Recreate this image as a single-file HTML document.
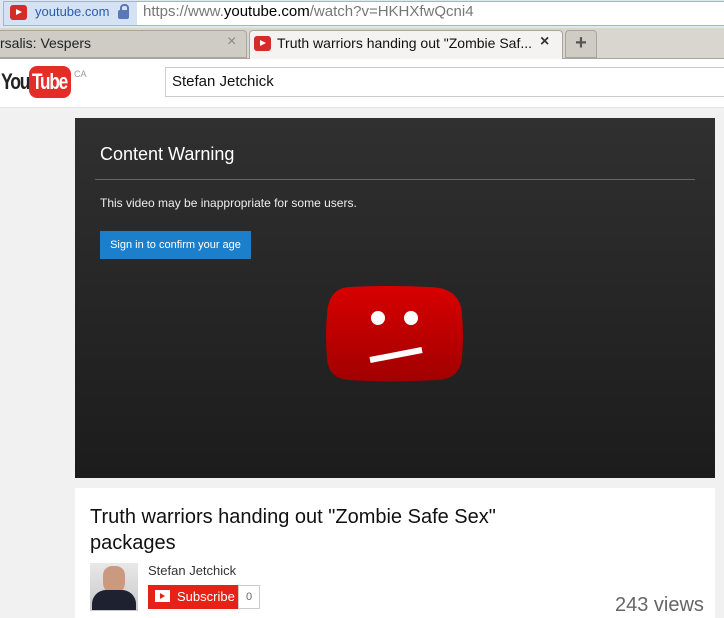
<!DOCTYPE html>
<html><head><style>
body{margin:0;width:724px;height:606px;overflow:hidden;background:#f1f1f1;font-family:"Liberation Sans",sans-serif;position:relative}
.a{position:absolute}
</style></head><body>
<div class="a" style="left:0;top:0;width:724px;height:28px;background:#dfe6ef"></div>
<div class="a" style="top:1px;left:3px;width:134px;height:23px;background:#d4e2f4;border:1px solid #9fb5d2"></div>
<div class="a" style="left:137px;top:1px;width:587px;height:23px;background:#fff;border:1px solid #9fb5d2;border-left:none"></div>
<div class="a" style="left:10px;top:5px;width:17px;height:15px;background:#d42b2b;border-radius:3px"></div>
<div class="a" style="left:16px;top:9px;width:0;height:0;border-left:6px solid #fff;border-top:3.5px solid transparent;border-bottom:3.5px solid transparent"></div>
<div class="a" style="left:35px;top:4px;font-size:13px;color:#2a5db0">youtube.com</div>
<div class="a" style="left:118px;top:10px;width:11px;height:9px;background:#5a78b8;border-radius:2px"></div>
<div class="a" style="left:120px;top:4px;width:5px;height:7px;border:2px solid #5a78b8;border-bottom:none;border-radius:4px 4px 0 0"></div>
<div class="a" style="left:143px;top:3px;font-size:15px;color:#777">https://www.<span style="color:#000">youtube.com</span>/watch?v=HKHXfwQcni4</div>
<div class="a" style="left:0;top:28px;width:724px;height:30px;background:#d9d6d0;border-bottom:1px solid #a9a59d"></div>
<div class="a" style="left:-5px;top:30px;width:250px;height:26px;background:#cfccc6;border:1px solid #a9a59d;border-radius:4px 4px 0 0"></div>
<div class="a" style="left:0;top:35px;font-size:14px;color:#222">rsalis: Vespers</div>
<div class="a" style="left:227px;top:33px;font-size:16px;color:#888">×</div>
<div class="a" style="left:249px;top:30px;width:312px;height:28px;background:#f4f3f1;border:1px solid #a9a59d;border-bottom:none;border-radius:4px 4px 0 0"></div>
<div class="a" style="left:254px;top:36px;width:17px;height:15px;background:#d42b2b;border-radius:3px"></div>
<div class="a" style="left:260px;top:40px;width:0;height:0;border-left:6px solid #fff;border-top:3.5px solid transparent;border-bottom:3.5px solid transparent"></div>
<div class="a" style="left:277px;top:35px;font-size:14px;color:#111">Truth warriors handing out "Zombie Saf...</div>
<div class="a" style="left:540px;top:33px;font-size:16px;color:#333;font-weight:bold">×</div>
<div class="a" style="left:565px;top:30px;width:30px;height:26px;background:#cfccc6;border:1px solid #a9a59d;border-radius:4px 4px 0 0;text-align:center;font-size:20px;line-height:24px;color:#555;font-weight:bold">+</div>
<div class="a" style="left:0;top:59px;width:724px;height:48px;background:#fff;border-bottom:1px solid #e4e4e4"></div>
<div class="a" style="left:1px;top:69px;font-size:22px;font-weight:bold;color:#222;letter-spacing:-1.5px;transform:scaleX(.8);transform-origin:left">You</div>
<div class="a" style="left:29px;top:66px;width:42px;height:32px;background:#e52d27;border-radius:8px"></div>
<div class="a" style="left:32px;top:69px;font-size:22px;font-weight:bold;color:#fff;letter-spacing:-1.5px;transform:scaleX(.78);transform-origin:left">Tube</div>
<div class="a" style="left:74px;top:69px;font-size:9px;color:#999">CA</div>
<div class="a" style="left:165px;top:67px;width:570px;height:28px;background:#fff;border:1px solid #ccc"></div>
<div class="a" style="left:172px;top:73px;font-size:15px;color:#111">Stefan Jetchick</div>
<div class="a" style="left:75px;top:118px;width:640px;height:360px;background:linear-gradient(#303030,#1c1c1c)"></div>
<div class="a" style="left:100px;top:144px;font-size:18px;color:#fff">Content Warning</div>
<div class="a" style="left:95px;top:179px;width:600px;height:1px;background:#666"></div>
<div class="a" style="left:100px;top:196px;font-size:12px;color:#eee">This video may be inappropriate for some users.</div>
<div class="a" style="left:100px;top:231px;width:151px;height:28px;background:#1b7fcc;color:#fff;font-size:11px;line-height:28px;text-align:center">Sign in to confirm your age</div>
<svg class="a" style="left:320px;top:280px" width="150" height="110">
<defs><linearGradient id="g" x1="0" y1="0" x2="0" y2="1"><stop offset="0" stop-color="#d80000"/><stop offset="1" stop-color="#a10000"/></linearGradient></defs>
<path d="M30 7 Q69 5 110 7 Q141 8 142 35 Q144 56 142 78 Q140 100 115 100 Q70 103 30 100 Q8 99 7 78 Q5 56 7 35 Q8 8 30 7Z" fill="url(#g)"/>
<circle cx="58" cy="38" r="7" fill="#fff"/><circle cx="91" cy="38" r="7" fill="#fff"/>
<path d="M50 80 L102 70" stroke="#fff" stroke-width="6"/>
</svg>
<div class="a" style="left:75px;top:488px;width:640px;height:130px;background:#fff"></div>
<div class="a" style="left:90px;top:504px;font-size:20px;line-height:26px;color:#111;width:430px">Truth warriors handing out "Zombie Safe Sex" packages</div>
<div class="a" style="left:90px;top:563px;width:48px;height:48px;background:linear-gradient(#e8e8e8,#c8c8c8)"></div>
<div class="a" style="left:103px;top:566px;width:22px;height:28px;background:#c99a80;border-radius:10px 10px 12px 12px"></div>
<div class="a" style="left:92px;top:590px;width:44px;height:20px;background:#1e2230;border-radius:14px 14px 0 0"></div>
<div class="a" style="left:148px;top:563px;font-size:13px;color:#333">Stefan Jetchick</div>
<div class="a" style="left:148px;top:585px;width:90px;height:24px;background:#e62117"></div>
<div class="a" style="left:155px;top:590px;width:15px;height:12px;background:#fff"></div>
<div class="a" style="left:160px;top:593px;width:0;height:0;border-left:5px solid #e62117;border-top:3px solid transparent;border-bottom:3px solid transparent"></div>
<div class="a" style="left:177px;top:589px;font-size:13px;color:#fff">Subscribe</div>
<div class="a" style="left:238px;top:585px;width:20px;height:22px;border:1px solid #ccc;font-size:11px;color:#666;text-align:center;line-height:22px">0</div>
<div class="a" style="left:615px;top:594px;font-size:20px;color:#666">243 views</div>
</body></html>
